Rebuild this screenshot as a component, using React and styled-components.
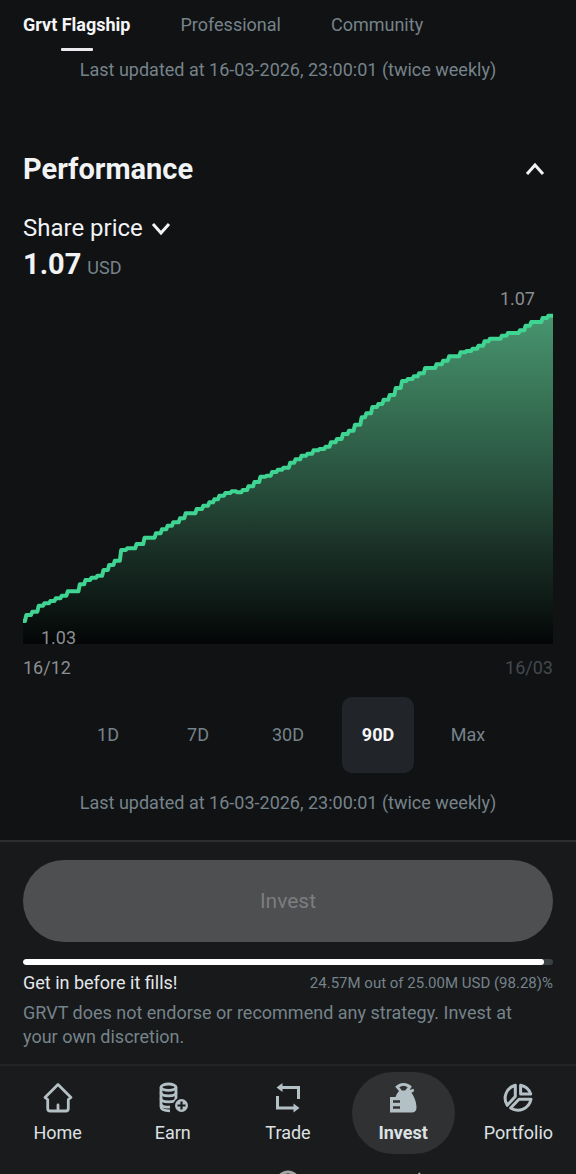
import React, { useState } from "react";
import styled, { createGlobalStyle } from "styled-components";

const GlobalStyle = createGlobalStyle`
  *, *::before, *::after { box-sizing: border-box; }
  body {
    margin: 0;
    background: #101214;
    color: #f1f3f4;
    font-family: Roboto, "Liberation Sans", sans-serif;
    font-size: 18px;
    line-height: 24px;
  }
  button { font: inherit; color: inherit; background: none; border: 0; padding: 0; cursor: pointer; }
  h2, p { margin: 0; }
`;

const Page = styled.div`
  min-height: 100vh;
  display: flex;
  flex-direction: column;
  overflow: hidden;
`;

const Main = styled.main`
  flex: 1;
  padding: 0 23px 24px;
`;

const TabBar = styled.div`
  display: flex;
  gap: 50px;
  padding-top: 13px;
`;

const Tab = styled.button`
  display: flex;
  flex-direction: column;
  align-items: center;
  gap: 11px;
  white-space: nowrap;
  color: ${(p) => (p.$active ? "#f5f6f7" : "#76838a")};
  font-weight: ${(p) => (p.$active ? 700 : 400)};
  &::after {
    content: "";
    width: 32px;
    height: 3px;
    border-radius: 1px;
    background: ${(p) => (p.$active ? "#ece9ee" : "transparent")};
  }
`;

const UpdatedNote = styled.p`
  margin-top: ${(p) => p.$top}px;
  text-align: center;
  color: #76838a;
`;

const SectionHeader = styled.div`
  display: flex;
  align-items: center;
  justify-content: space-between;
  margin-top: 67px;
  padding-right: 8px;
`;

const SectionTitle = styled.h2`
  font-size: 29px;
  line-height: 40px;
  font-weight: 700;
`;

const IconButton = styled.button`
  display: flex;
`;

const MetricButton = styled.button`
  display: flex;
  align-items: center;
  gap: 8px;
  margin-top: 23px;
  font-size: 24px;
  line-height: 32px;
`;

const MetricValue = styled.div`
  display: flex;
  align-items: baseline;
  gap: 6px;
  line-height: 40px;
`;

const Amount = styled.strong`
  font-size: 29px;
`;

const Unit = styled.span`
  color: #76838a;
`;

const Chart = styled.figure`
  margin: 0;
  display: flex;
  flex-direction: column;
  color: #8b8e91;
`;

const HighLabel = styled.span`
  align-self: flex-end;
  padding-right: 18px;
  line-height: 22px;
`;

const Plot = styled.div`
  position: relative;
  height: 334px;
  svg { display: block; width: 100%; height: 100%; overflow: visible; }
`;

const LowLabel = styled.span`
  position: absolute;
  left: 18px;
  bottom: -6px;
`;

const Axis = styled.figcaption`
  display: flex;
  justify-content: space-between;
  margin-top: 12px;
`;

const EndDate = styled.span`
  color: #43494e;
`;

const Ranges = styled.div`
  display: flex;
  justify-content: center;
  gap: 18px;
  margin-top: 17px;
`;

const Range = styled.button`
  width: 72px;
  height: 76px;
  border-radius: 10px;
  color: ${(p) => (p.$active ? "#f5f6f7" : "#76838a")};
  font-weight: ${(p) => (p.$active ? 700 : 400)};
  background: ${(p) => (p.$active ? "#212529" : "transparent")};
`;

const Footer = styled.footer`
  padding: 18px 23px 15px;
  border-top: 2px solid #2c2f32;
  background: #17191b;
`;

const InvestButton = styled.button`
  display: block;
  width: 100%;
  height: 82px;
  border-radius: 41px;
  background: #4e4f51;
  color: #7c7d80;
  font-size: 21px;
`;

const Capacity = styled.div`
  height: 6px;
  margin-top: 17px;
  border-radius: 3px;
  overflow: hidden;
  background: #3b4143;
`;

const CapacityFill = styled.div`
  height: 100%;
  border-radius: 3px;
  background: #ffffff;
`;

const CapacityRow = styled.div`
  display: flex;
  justify-content: space-between;
  margin-top: 6px;
  color: #e4e7e9;
`;

const CapacityText = styled.span`
  font-size: 15px;
  color: #76838a;
`;

const Disclaimer = styled.p`
  margin-top: 6px;
  padding-right: 24px;
  color: #76838a;
`;

const Nav = styled.nav`
  display: grid;
  grid-template-columns: repeat(5, 1fr);
  padding: 6px 0 16px;
  border-top: 2px solid #222527;
  background: #1a1b1d;
`;

const NavItem = styled.a`
  justify-self: center;
  display: flex;
  flex-direction: column;
  align-items: center;
  gap: 7px;
  width: 103px;
  height: 82px;
  padding-top: 10px;
  border-radius: 41px;
  text-decoration: none;
  color: #dde1e3;
  font-weight: ${(p) => (p.$active ? 700 : 400)};
  background: ${(p) => (p.$active ? "#303133" : "transparent")};
  svg { display: block; color: #b3c0c5; }
`;

const SystemBar = styled.div`
  height: 4px;
  overflow: hidden;
  background: #1a1b1d;
  svg { display: block; margin: 0 auto; }
`;

const Chevron = ({ up }) => (
  <svg width="20" height="20" viewBox="0 0 20 20" fill="none" stroke="currentColor" strokeWidth="3" aria-hidden="true">
    <path d={up ? "M2 15L10 6l8 9" : "M2 6l8 9 8-9"} />
  </svg>
);

const HomeIcon = () => (
  <svg width="32" height="32" viewBox="0 0 32 32" fill="none" stroke="currentColor" strokeWidth="2.8" strokeLinejoin="round" strokeLinecap="round">
    <path d="M16 2.500L3 15.500l2.700 2V26.500q0 2.500 2.500 2.500h15.600q2.500 0 2.500-2.500V17.500l2.700-2z" />
    <path d="M16 23V28" />
  </svg>
);

const EarnIcon = () => (
  <svg width="32" height="32" viewBox="0 0 32 32" fill="none" stroke="currentColor" strokeWidth="2.800">
    <ellipse cx="11.500" cy="5.200" rx="7.500" ry="3.200" />
    <path d="M4 5.200V24.800c0 2.800 4 4 9 4" />
    <path d="M19 5.200V17" />
    <path d="M4 10.500c0 4.500 15 4.500 15 0M4 16.500c0 4.500 15 4.500 15 0M4 22.500c1 2.200 5 3 9 2.300" />
    <circle cx="24.500" cy="23.500" r="8.200" fill="#1a1b1d" stroke="none" />
    <circle cx="24.500" cy="23.500" r="6.500" fill="currentColor" stroke="none" />
    <path d="M24.500 19.500v8M20.500 23.500h8" stroke="#1a1b1d" strokeWidth="2.200" />
  </svg>
);

const TradeIcon = () => (
  <svg width="32" height="32" viewBox="0 0 32 32" fill="none" stroke="currentColor" strokeWidth="3">
    <path d="M8 5.500h18.500V17" />
    <path d="M5.500 14v12H23" />
    <path d="M4.500 5.500l6-4.500v9zM27.500 26L21.500 21.500v9z" fill="currentColor" stroke="none" />
  </svg>
);

const InvestIcon = () => (
  <svg width="32" height="32" viewBox="0 0 32 32" fill="currentColor">
    <path d="M12 9L8.200 4.800Q11.500 1 16.500 1t8.300 3.500L22.500 8l4-1.200.6 2.400-2.600 1.600C27 14.500 29.500 20 29.500 25.500q0 5-5 5H3V15h5.500q1.200-3.500 3.500-6z" />
    <path d="M12.300 5.200q4.200-3 8.400 0l-2.600 3.200h-3.200z" fill="#303133" />
    <path d="M6 19.500h7M6 25.500h7" stroke="#303133" strokeWidth="2.600" />
  </svg>
);

const PortfolioIcon = () => (
  <svg width="32" height="32" viewBox="0 0 32 32" fill="none" stroke="currentColor" strokeWidth="3" strokeLinejoin="round">
    <path d="M13.300 3.200V14.500L5.200 23.300A13.400 13.400 0 0 1 13.300 3.200z" />
    <path d="M18.600 3.200V12H28.700A13.400 13.400 0 0 0 18.600 3.200z" />
    <path d="M29 17.300H17L8.600 26A13.400 13.400 0 0 0 29 17.300z" />
  </svg>
);

// Each entry is [x, y] where the stepped price line reaches a new level.
const PRICE_STEPS = [
  [0, 933], [9, 915], [27, 905], [46, 887], [63, 880], [81, 873], [97, 865], [115, 857], [133, 844],
  [169, 823], [186, 810], [204, 803], [222, 797], [240, 780], [257, 765], [274, 752], [293, 720],
  [311, 715], [339, 702], [363, 683], [397, 670], [415, 658], [432, 647], [449, 637], [469, 625],
  [486, 610], [519, 597], [539, 587], [557, 577], [572, 568], [587, 557], [605, 549], [624, 544],
  [641, 547], [657, 540], [674, 529], [692, 516], [710, 500], [729, 497], [745, 486], [762, 479],
  [779, 473], [799, 458], [815, 448], [833, 437], [851, 431], [869, 421], [887, 417], [905, 410],
  [921, 397], [939, 387], [957, 372], [975, 362], [993, 344], [1013, 322], [1027, 310], [1045, 291],
  [1063, 282], [1079, 269], [1097, 255], [1115, 234], [1134, 213], [1151, 207], [1169, 199],
  [1185, 190], [1203, 174], [1237, 163], [1257, 152], [1275, 139], [1309, 127], [1327, 123],
  [1345, 116], [1363, 107], [1381, 94], [1397, 86], [1433, 77], [1451, 69], [1487, 61], [1504, 47],
  [1521, 36], [1555, 24], [1572, 17],
];

const linePath =
  PRICE_STEPS.map(([x, y], i) => (i === 0 ? `M${x} ${y}` : `H${x - 3}L${x + 1} ${y}`)).join("") + "H1587";

const PriceChart = () => (
  <svg viewBox="0 0 1587 1002" preserveAspectRatio="none" role="img" aria-label="Share price, last 90 days">
    <defs>
      <linearGradient id="priceFill" x1="0" y1="0" x2="0" y2="1">
        <stop offset="0" stopColor="#47956f" />
        <stop offset="0.3" stopColor="#356d51" />
        <stop offset="0.52" stopColor="#274e3c" />
        <stop offset="0.72" stopColor="#192e25" />
        <stop offset="0.88" stopColor="#0d1814" />
        <stop offset="1" stopColor="#040506" />
      </linearGradient>
    </defs>
    <path d={`${linePath}V1002H0z`} fill="url(#priceFill)" />
    <path d={linePath} fill="none" stroke="#3fd492" strokeWidth="4" strokeLinejoin="round" vectorEffect="non-scaling-stroke" />
  </svg>
);

const TABS = ["Grvt Flagship", "Professional", "Community"];
const RANGES = ["1D", "7D", "30D", "90D", "Max"];
const NAV = [
  ["Home", HomeIcon],
  ["Earn", EarnIcon],
  ["Trade", TradeIcon],
  ["Invest", InvestIcon],
  ["Portfolio", PortfolioIcon],
];
const UPDATED = "Last updated at 16-03-2026, 23:00:01 (twice weekly)";

export default function App() {
  const [tab, setTab] = useState("Grvt Flagship");
  const [range, setRange] = useState("90D");
  const filled = 98.28;

  return (
    <Page>
      <GlobalStyle />
      <Main>
        <TabBar role="tablist">
          {TABS.map((name) => (
            <Tab key={name} role="tab" aria-selected={tab === name} $active={tab === name} onClick={() => setTab(name)}>
              {name}
            </Tab>
          ))}
        </TabBar>
        <UpdatedNote $top={7}>{UPDATED}</UpdatedNote>

        <SectionHeader>
          <SectionTitle>Performance</SectionTitle>
          <IconButton aria-label="Collapse performance"><Chevron up /></IconButton>
        </SectionHeader>
        <MetricButton>Share price<Chevron /></MetricButton>
        <MetricValue>
          <Amount>1.07</Amount>
          <Unit>USD</Unit>
        </MetricValue>

        <Chart>
          <HighLabel>1.07</HighLabel>
          <Plot>
            <PriceChart />
            <LowLabel>1.03</LowLabel>
          </Plot>
          <Axis>
            <span>16/12</span>
            <EndDate>16/03</EndDate>
          </Axis>
        </Chart>

        <Ranges>
          {RANGES.map((name) => (
            <Range key={name} aria-pressed={range === name} $active={range === name} onClick={() => setRange(name)}>
              {name}
            </Range>
          ))}
        </Ranges>
        <UpdatedNote $top={18}>{UPDATED}</UpdatedNote>
      </Main>

      <Footer>
        <InvestButton disabled>Invest</InvestButton>
        <Capacity role="progressbar" aria-label="Capacity filled" aria-valuenow={filled}>
          <CapacityFill style={{ width: `${filled}%` }} />
        </Capacity>
        <CapacityRow>
          <span>Get in before it fills!</span>
          <CapacityText>24.57M out of 25.00M USD (98.28)%</CapacityText>
        </CapacityRow>
        <Disclaimer>GRVT does not endorse or recommend any strategy. Invest at your own discretion.</Disclaimer>
      </Footer>

      <Nav>
        {NAV.map(([name, Icon]) => (
          <NavItem key={name} href={`#${name.toLowerCase()}`} $active={name === "Invest"}>
            <Icon />
            {name}
          </NavItem>
        ))}
      </Nav>
      <SystemBar>
        <svg width="288" height="24" viewBox="0 0 288 24" fill="none" aria-hidden="true">
          <circle cx="144" cy="13" r="11" stroke="#a3a4a6" strokeWidth="3" />
          <path d="M276 3l-8 9 8 9" stroke="#a3a4a6" strokeWidth="2" />
        </svg>
      </SystemBar>
    </Page>
  );
}
